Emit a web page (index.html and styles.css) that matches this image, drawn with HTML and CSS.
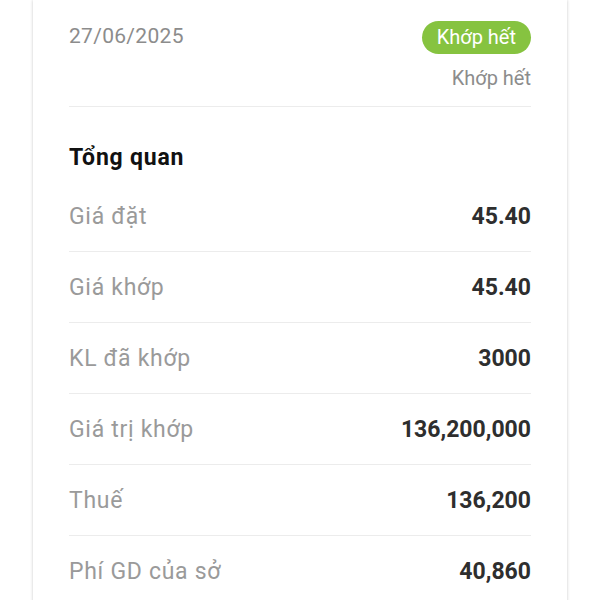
FILE: index.html
```html
<!DOCTYPE html>
<html lang="vi">
<head>
<meta charset="utf-8">
<link rel="stylesheet" href="styles.css">
</head>
<body>
<div class="card">
  <div class="header">
    <div class="date">27/06/2025</div>
    <div class="status">
      <span class="badge">Khớp hết</span>
      <span class="status-text">Khớp hết</span>
    </div>
  </div>
  <div class="title">Tổng quan</div>
  <div class="rows">
    <div class="row"><span class="label">Giá đặt</span><span class="value">45.40</span></div>
    <div class="row"><span class="label">Giá khớp</span><span class="value">45.40</span></div>
    <div class="row"><span class="label">KL đã khớp</span><span class="value">3000</span></div>
    <div class="row"><span class="label">Giá trị khớp</span><span class="value">136,200,000</span></div>
    <div class="row"><span class="label">Thuế</span><span class="value">136,200</span></div>
    <div class="row"><span class="label">Phí GD của sở</span><span class="value">40,860</span></div>
  </div>
</div>
</body>
</html>
```
FILE: styles.css
```css
html, body {
  margin: 0;
  padding: 0;
  background: #ffffff;
  font-family: Roboto, "Noto Sans", sans-serif;
  height: 600px;
  overflow: hidden;
}
.card {
  margin-left: 33px;
  width: 534px;
  box-sizing: border-box;
  padding: 0 36px;
  background: #fff;
  min-height: 700px;
  box-shadow: 0 0 3px rgba(0, 0, 0, 0.22);
}
.header {
  display: flex;
  justify-content: space-between;
  align-items: flex-start;
  padding-top: 21px;
  padding-bottom: 16px;
  border-bottom: 1px solid #ececec;
}
.date {
  margin-top: 2px;
  font-size: 21px;
  line-height: 26px;
  letter-spacing: 0.3px;
  color: #8c8c8c;
}
.status {
  display: flex;
  flex-direction: column;
  align-items: flex-end;
}
.badge {
  height: 33px;
  line-height: 33px;
  padding: 0 15px;
  border-radius: 17px;
  background: #86c340;
  color: #fff;
  font-size: 20px;
}
.status-text {
  margin-top: 12px;
  font-size: 20px;
  line-height: 24px;
  color: #8c8c8c;
}
.title {
  margin-top: 37px;
  margin-bottom: 9px;
  font-size: 23px;
  line-height: 28px;
  letter-spacing: 0.8px;
  font-weight: 700;
  color: #111;
}
.row {
  display: flex;
  justify-content: space-between;
  align-items: center;
  height: 70px;
  border-bottom: 1px solid #ececec;
}
.label {
  font-size: 23px;
  letter-spacing: 0.7px;
  color: #9a9a9a;
}
.value {
  font-size: 23px;
  font-weight: 700;
  color: #2e2e2e;
}
```
